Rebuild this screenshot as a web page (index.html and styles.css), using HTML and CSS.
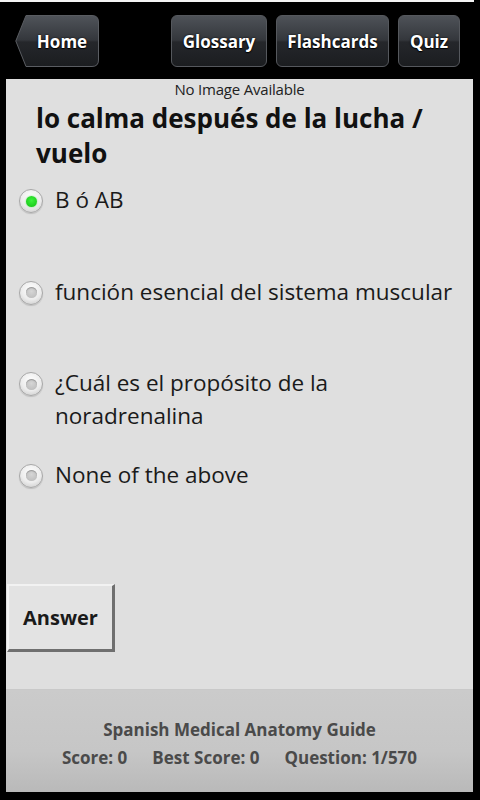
FILE: index.html
```html
<!DOCTYPE html>
<html>
<head>
<meta charset="utf-8">
<link rel="stylesheet" href="styles.css">
</head>
<body>
<div class="screen">
  <div class="topline"></div>
  <div class="header">
    <div class="btn home">
      <svg class="home-bg" width="84" height="52" viewBox="0 0 84 52">
        <defs>
          <linearGradient id="hg" x1="0" y1="0" x2="0" y2="1">
            <stop offset="0" stop-color="#50545a"/>
            <stop offset="0.48" stop-color="#34373c"/>
            <stop offset="0.52" stop-color="#25272b"/>
            <stop offset="1" stop-color="#1b1d20"/>
          </linearGradient>
        </defs>
        <path d="M11 0.5 H77 Q83.5 0.5 83.5 7 V45 Q83.5 51.5 77 51.5 H11 L0.8 26 Z" fill="url(#hg)" stroke="#5a5d62" stroke-width="1"/>
      </svg>
      <span class="label">Home</span>
    </div>
    <div class="nav">
      <div class="btn glossary"><span class="label">Glossary</span></div>
      <div class="btn flash"><span class="label">Flashcards</span></div>
      <div class="btn quiz"><span class="label">Quiz</span></div>
    </div>
  </div>
  <div class="main">
    <div class="noimage">No Image Available</div>
    <h1 class="question">lo calma después de la lucha / vuelo</h1>
    <div class="options">
      <div class="option"><span class="radio checked"><span class="dot"></span></span><span class="otext">B ó AB</span></div>
      <div class="option"><span class="radio"><span class="dot"></span></span><span class="otext">función esencial del sistema muscular</span></div>
      <div class="option"><span class="radio"><span class="dot"></span></span><span class="otext">¿Cuál es el propósito de la noradrenalina</span></div>
      <div class="option"><span class="radio"><span class="dot"></span></span><span class="otext">None of the above</span></div>
    </div>
    <div class="answer">Answer</div>
  </div>
  <div class="footer">
    <div class="ftitle">Spanish Medical Anatomy Guide</div>
    <div class="fscore"><span>Score: 0</span><span>Best Score: 0</span><span>Question: 1/570</span></div>
  </div>
</div>
</body>
</html>
```
FILE: styles.css
```css
html, body {
  margin: 0;
  padding: 0;
  background: #000;
}
.screen {
  width: 480px;
  height: 800px;
  background: #000;
  font-family: "Open Sans", "Noto Sans", sans-serif;
  overflow: hidden;
}
.topline {
  width: 474px;
  height: 2px;
  background: #f4f4f4;
}
.header {
  height: 77px;
  box-sizing: border-box;
  padding: 13px 20px 0 15px;
  display: flex;
  justify-content: space-between;
  align-items: flex-start;
}
.nav {
  display: flex;
  gap: 9px;
}
.btn {
  position: relative;
  height: 52px;
  box-sizing: border-box;
  display: flex;
  align-items: center;
  justify-content: center;
  border-radius: 6px;
  border: 1px solid #55585d;
  background: linear-gradient(#4e5258 0%, #34373c 48%, #25272b 52%, #1b1d20 100%);
  color: #fff;
  font-weight: 700;
  font-size: 17px;
  text-shadow: 0 0 2px #000, 0 1px 1px #000;
}
.btn .label {
  position: relative;
}
.home {
  width: 84px;
  border: none;
  background: none;
  padding-left: 10px;
}
.home-bg {
  position: absolute;
  left: 0;
  top: 0;
}
.glossary { width: 96px; }
.flash { width: 113px; }
.quiz { width: 62px; }

.main {
  margin-left: 6px;
  width: 467px;
  height: 610px;
  background: #dfdfdf;
  box-sizing: border-box;
  padding-top: 2px;
}
.noimage {
  text-align: center;
  font-size: 15px;
  line-height: 17px;
  color: #222;
  letter-spacing: -0.2px;
}
.question {
  margin: 3px 0 0 0;
  padding: 0 20px 0 30px;
  font-size: 26px;
  line-height: 35px;
  font-weight: 700;
  color: #111;
}
.options {
  margin-top: 12px;
}
.option {
  height: 91.5px;
  display: flex;
  align-items: flex-start;
}
.radio {
  flex: none;
  width: 24px;
  height: 24px;
  margin: 6px 0 0 13px;
  border-radius: 50%;
  box-sizing: border-box;
  border: 1px solid #a8a8a8;
  background: radial-gradient(circle at 50% 35%, #ffffff 0%, #ececec 55%, #c4c4c4 100%);
  box-shadow: 0 1px 1px rgba(0,0,0,0.15);
  display: flex;
  align-items: center;
  justify-content: center;
}
.radio .dot {
  width: 11px;
  height: 11px;
  border-radius: 50%;
  background: radial-gradient(circle at 50% 40%, #d6d6d6, #b8b8b8);
  box-shadow: inset 0 1px 1px #999;
}
.radio.checked .dot {
  background: radial-gradient(circle at 50% 40%, #3cf23c, #12c012);
  box-shadow: 0 0 2px #7d7;
}
.otext {
  margin-left: 12px;
  padding-right: 14px;
  font-size: 22.5px;
  line-height: 33px;
  color: #1a1a1a;
}
.answer {
  margin-top: 35px;
  margin-left: 1px;
  width: 108px;
  height: 68px;
  box-sizing: border-box;
  border-top: 2px solid #f2f2f2;
  border-left: 2px solid #f2f2f2;
  border-right: 3px solid #6f6f6f;
  border-bottom: 3px solid #6f6f6f;
  background: #e3e3e3;
  display: flex;
  align-items: center;
  justify-content: center;
  font-weight: 700;
  font-size: 20px;
  color: #1a1a1a;
}
.footer {
  margin-left: 6px;
  width: 467px;
  height: 103px;
  box-sizing: border-box;
  border-top: 1px solid #c9c9c9;
  background: linear-gradient(#cbcbcb 0%, #c6c6c6 60%, #b9b9b9 100%);
  padding-top: 26px;
  text-align: center;
  color: #4a4a4a;
  font-weight: 700;
  font-size: 17px;
  line-height: 28px;
}
.fscore {
  display: flex;
  justify-content: center;
  gap: 25px;
}
```
